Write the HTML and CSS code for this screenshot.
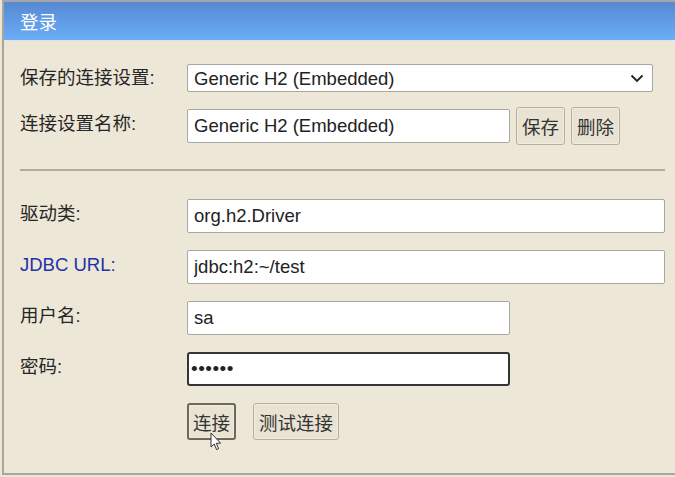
FILE: index.html
```html
<!DOCTYPE html>
<html lang="zh">
<head>
<meta charset="utf-8">
<title>登录</title>
<link rel="stylesheet" href="styles.css">
</head>
<body>
<div class="panel">
  <div class="header">登录</div>
  <form class="body">
    <div class="row row-select">
      <label class="label">保存的连接设置:</label>
      <div class="select-wrap">
        <select class="select">
          <option>Generic H2 (Embedded)</option>
        </select>
        <svg class="chevron" width="14" height="9" viewBox="0 0 14 9"><path d="M1.5 1.5 L7 7 L12.5 1.5" fill="none" stroke="#222" stroke-width="1.8"/></svg>
      </div>
    </div>
    <div class="row row-tall">
      <label class="label">连接设置名称:</label>
      <input class="input short" type="text" value="Generic H2 (Embedded)">
      <button type="button" class="btn">保存</button>
      <button type="button" class="btn">删除</button>
    </div>
    <hr class="sep">
    <div class="row">
      <label class="label">驱动类:</label>
      <input class="input long" type="text" value="org.h2.Driver">
    </div>
    <div class="row">
      <label class="label link">JDBC URL:</label>
      <input class="input long" type="text" value="jdbc:h2:~/test">
    </div>
    <div class="row">
      <label class="label">用户名:</label>
      <input class="input short" type="text" value="sa">
    </div>
    <div class="row">
      <label class="label">密码:</label>
      <input class="input short pwd" type="password" value="123456">
    </div>
    <div class="row row-btns">
      <span class="label"></span>
      <span class="btn-holder">
        <button type="button" class="btn btn-active">连接</button>
        <svg class="cursor" width="12" height="19" viewBox="0 0 12 19"><path d="M1 1 L1 15 L4.2 12 L6.6 17.6 L8.6 16.7 L6.3 11.3 L10.6 11.2 Z" fill="#fff" stroke="#333" stroke-width="1" stroke-linejoin="round"/></svg>
      </span>
      <button type="button" class="btn btn-gap">测试连接</button>
    </div>
  </form>
</div>
</body>
</html>
```

FILE: styles.css
```css
html, body {
  margin: 0;
  padding: 0;
  background: #ece6d6;
  overflow: hidden;
  font-family: "Liberation Sans", "Noto Sans CJK SC", sans-serif;
}

.panel {
  margin-left: 2px;
  border-top: 2px solid #a3a6aa;
  border-left: 2px solid #aaa598;
  border-bottom: 2px solid #aaa598;
  background: #ede7d7;
}

.header {
  height: 39px;
  box-sizing: border-box;
  border-bottom: 1px solid #dfe3e6;
  background: linear-gradient(#5788d2, #6aaef7);
  color: #fff;
  font-size: 18.5px;
  line-height: 38px;
  padding-left: 16px;
  font-family: "Noto Sans CJK SC", sans-serif;
}

.body {
  padding: 23px 0 33px 16px;
  margin: 0;
}

.row {
  display: flex;
  align-items: center;
  height: 34px;
  margin-bottom: 17px;
}

.row-select {
  height: 28px;
  margin-bottom: 15px;
}

.row-tall {
  height: 38px;
  margin-bottom: 0;
}

.row-btns {
  height: 37px;
  margin-bottom: 0;
}

.label {
  width: 167px;
  flex: none;
  font-size: 18.5px;
  line-height: 22px;
  color: #262626;
  padding-bottom: 5px;
}

.row-select .label {
  padding-bottom: 0;
}

.label.link {
  color: #2332a8;
}

.select-wrap {
  position: relative;
  width: 466px;
  height: 28px;
}

.select {
  appearance: none;
  -webkit-appearance: none;
  width: 100%;
  height: 28px;
  box-sizing: border-box;
  border: 1px solid #a9a7a2;
  border-radius: 2px;
  background: #fff;
  font-family: inherit;
  font-size: 18.5px;
  color: #222;
  padding: 0 0 0 6px;
  margin: 0;
}

.chevron {
  position: absolute;
  right: 9px;
  top: 10px;
  pointer-events: none;
}

.input {
  box-sizing: border-box;
  height: 34px;
  border: 1px solid #a9a7a2;
  border-radius: 2px;
  background: #fff;
  font-family: inherit;
  font-size: 18.5px;
  color: #222;
  padding: 0 0 0 6px;
  margin: 0;
  outline: none;
}

.input.short {
  width: 323px;
}

.input.long {
  width: 478px;
}

.input.pwd {
  border: 2px solid #353535;
  border-radius: 3px;
  padding-left: 2px;
  font-size: 19px;
  letter-spacing: 0.5px;
}

.btn {
  box-sizing: border-box;
  height: 38px;
  margin-left: 6px;
  padding: 0 5px;
  border: 1px solid #b5af9f;
  box-shadow: inset 0 0 0 1px #f1ece0;
  border-radius: 3px;
  background: #e9e3d3;
  font-family: "Noto Sans CJK SC", sans-serif;
  font-size: 18.5px;
  color: #333;
  cursor: default;
}

.row-btns .btn {
  height: 37px;
}

.btn-holder {
  position: relative;
  display: inline-flex;
}

.btn-holder .btn {
  margin-left: 0;
}

.btn-active {
  border: 2px solid #6d685d;
  padding: 0 4px;
}

.btn-gap {
  margin-left: 17px;
}

.cursor {
  position: absolute;
  left: 23px;
  top: 29px;
}

.sep {
  margin: 24px 0 28px 0;
  width: 645px;
  height: 2px;
  border: none;
  background: #b2ac9f;
}
```
